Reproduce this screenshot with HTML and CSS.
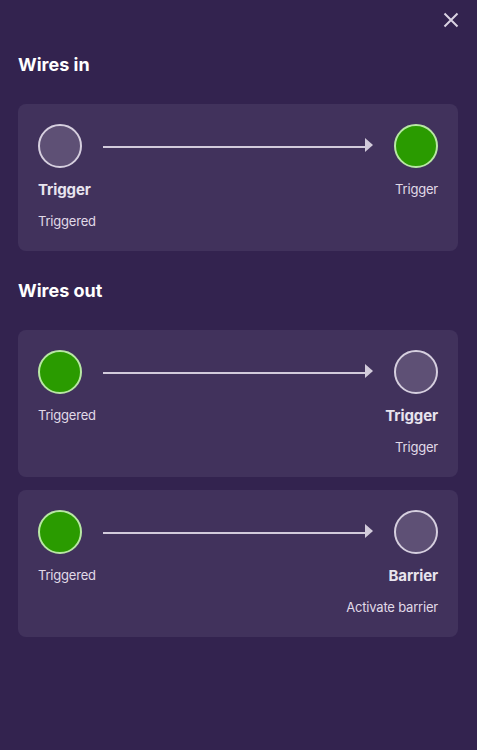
FILE: index.html
```html
<!DOCTYPE html>
<html>
<head>
<meta charset="utf-8">
<link rel="stylesheet" href="styles.css">
</head>
<body>
<div class="panel">
  <div class="topbar">
    <button class="close" aria-label="Close">
      <svg width="16" height="16" viewBox="0 0 16 16"><path d="M1.5 1.5 L14.5 14.5 M14.5 1.5 L1.5 14.5" stroke="#d9d2e2" stroke-width="2" stroke-linecap="butt" fill="none"/></svg>
    </button>
  </div>

  <h2 class="heading first">Wires in</h2>
  <div class="card">
    <div class="side left">
      <div class="dot off"></div>
      <div class="name">Trigger</div>
      <div class="sub">Triggered</div>
    </div>
    <div class="arrow"><div class="shaft"></div><div class="head"></div></div>
    <div class="side right">
      <div class="dot on"></div>
      <div class="sub">Trigger</div>
    </div>
  </div>

  <h2 class="heading">Wires out</h2>
  <div class="list">
    <div class="card">
      <div class="side left">
        <div class="dot on"></div>
        <div class="sub">Triggered</div>
      </div>
      <div class="arrow"><div class="shaft"></div><div class="head"></div></div>
      <div class="side right">
        <div class="dot off"></div>
        <div class="name">Trigger</div>
        <div class="sub">Trigger</div>
      </div>
    </div>
    <div class="card">
      <div class="side left">
        <div class="dot on"></div>
        <div class="sub">Triggered</div>
      </div>
      <div class="arrow"><div class="shaft"></div><div class="head"></div></div>
      <div class="side right">
        <div class="dot off"></div>
        <div class="name">Barrier</div>
        <div class="sub">Activate barrier</div>
      </div>
    </div>
  </div>
</div>
</body>
</html>
```

FILE: styles.css
```css
* { box-sizing: border-box; }
html, body {
  margin: 0;
  padding: 0;
  background: #33234f;
  height: 100%;
}
body {
  font-family: Inter, "Noto Sans", sans-serif;
  color: #e6e1ec;
}
.panel {
  width: 477px;
  height: 750px;
  padding: 12px 19px 0 18px;
  display: flex;
  flex-direction: column;
}
.topbar {
  display: flex;
  justify-content: flex-end;
  height: 16px;
}
.close {
  background: none;
  border: 0;
  padding: 0;
  width: 16px;
  height: 16px;
  margin-right: -1px;
  display: block;
  cursor: pointer;
}
.close svg { display: block; }
.heading {
  margin: 28px 0 0;
  font-size: 18px;
  line-height: 24px;
  font-weight: 700;
  color: #ffffff;
  letter-spacing: 0;
}
.heading.first { margin-top: 25px; }
.card {
  margin-top: 27px;
  background: #41325c;
  border-radius: 8px;
  padding: 20px 20px 21px;
  display: flex;
  align-items: flex-start;
}
.list {
  display: flex;
  flex-direction: column;
  gap: 13px;
  margin-top: 27px;
}
.list .card { margin-top: 0; }
.side {
  width: 44px;
  flex: 0 0 44px;
  display: flex;
  flex-direction: column;
}
.side.left { align-items: flex-start; }
.side.right { align-items: flex-end; }
.dot {
  width: 44px;
  height: 44px;
  border-radius: 50%;
  border: 2px solid #d6cfdf;
  background: #5e5075;
  margin-bottom: 12px;
}
.dot.on {
  background: #2a9b00;
  border-color: #b8e8a4;
}
.name {
  font-size: 15px;
  line-height: 20px;
  font-weight: 700;
  color: #e8e4ee;
  margin-bottom: 12px;
  white-space: nowrap;
  letter-spacing: -0.1px;
}
.sub {
  font-size: 13px;
  line-height: 18px;
  color: #e0dae8;
  white-space: nowrap;
  letter-spacing: -0.2px;
}
.arrow {
  flex: 1;
  margin: 14px 21px 0;
  height: 14px;
  display: flex;
  align-items: center;
}
.shaft {
  flex: 1;
  height: 2px;
  background: #d2cbdb;
  margin-top: 3px;
}
.head {
  width: 0;
  height: 0;
  border-top: 7px solid transparent;
  border-bottom: 7px solid transparent;
  border-left: 8px solid #d2cbdb;
}
```
